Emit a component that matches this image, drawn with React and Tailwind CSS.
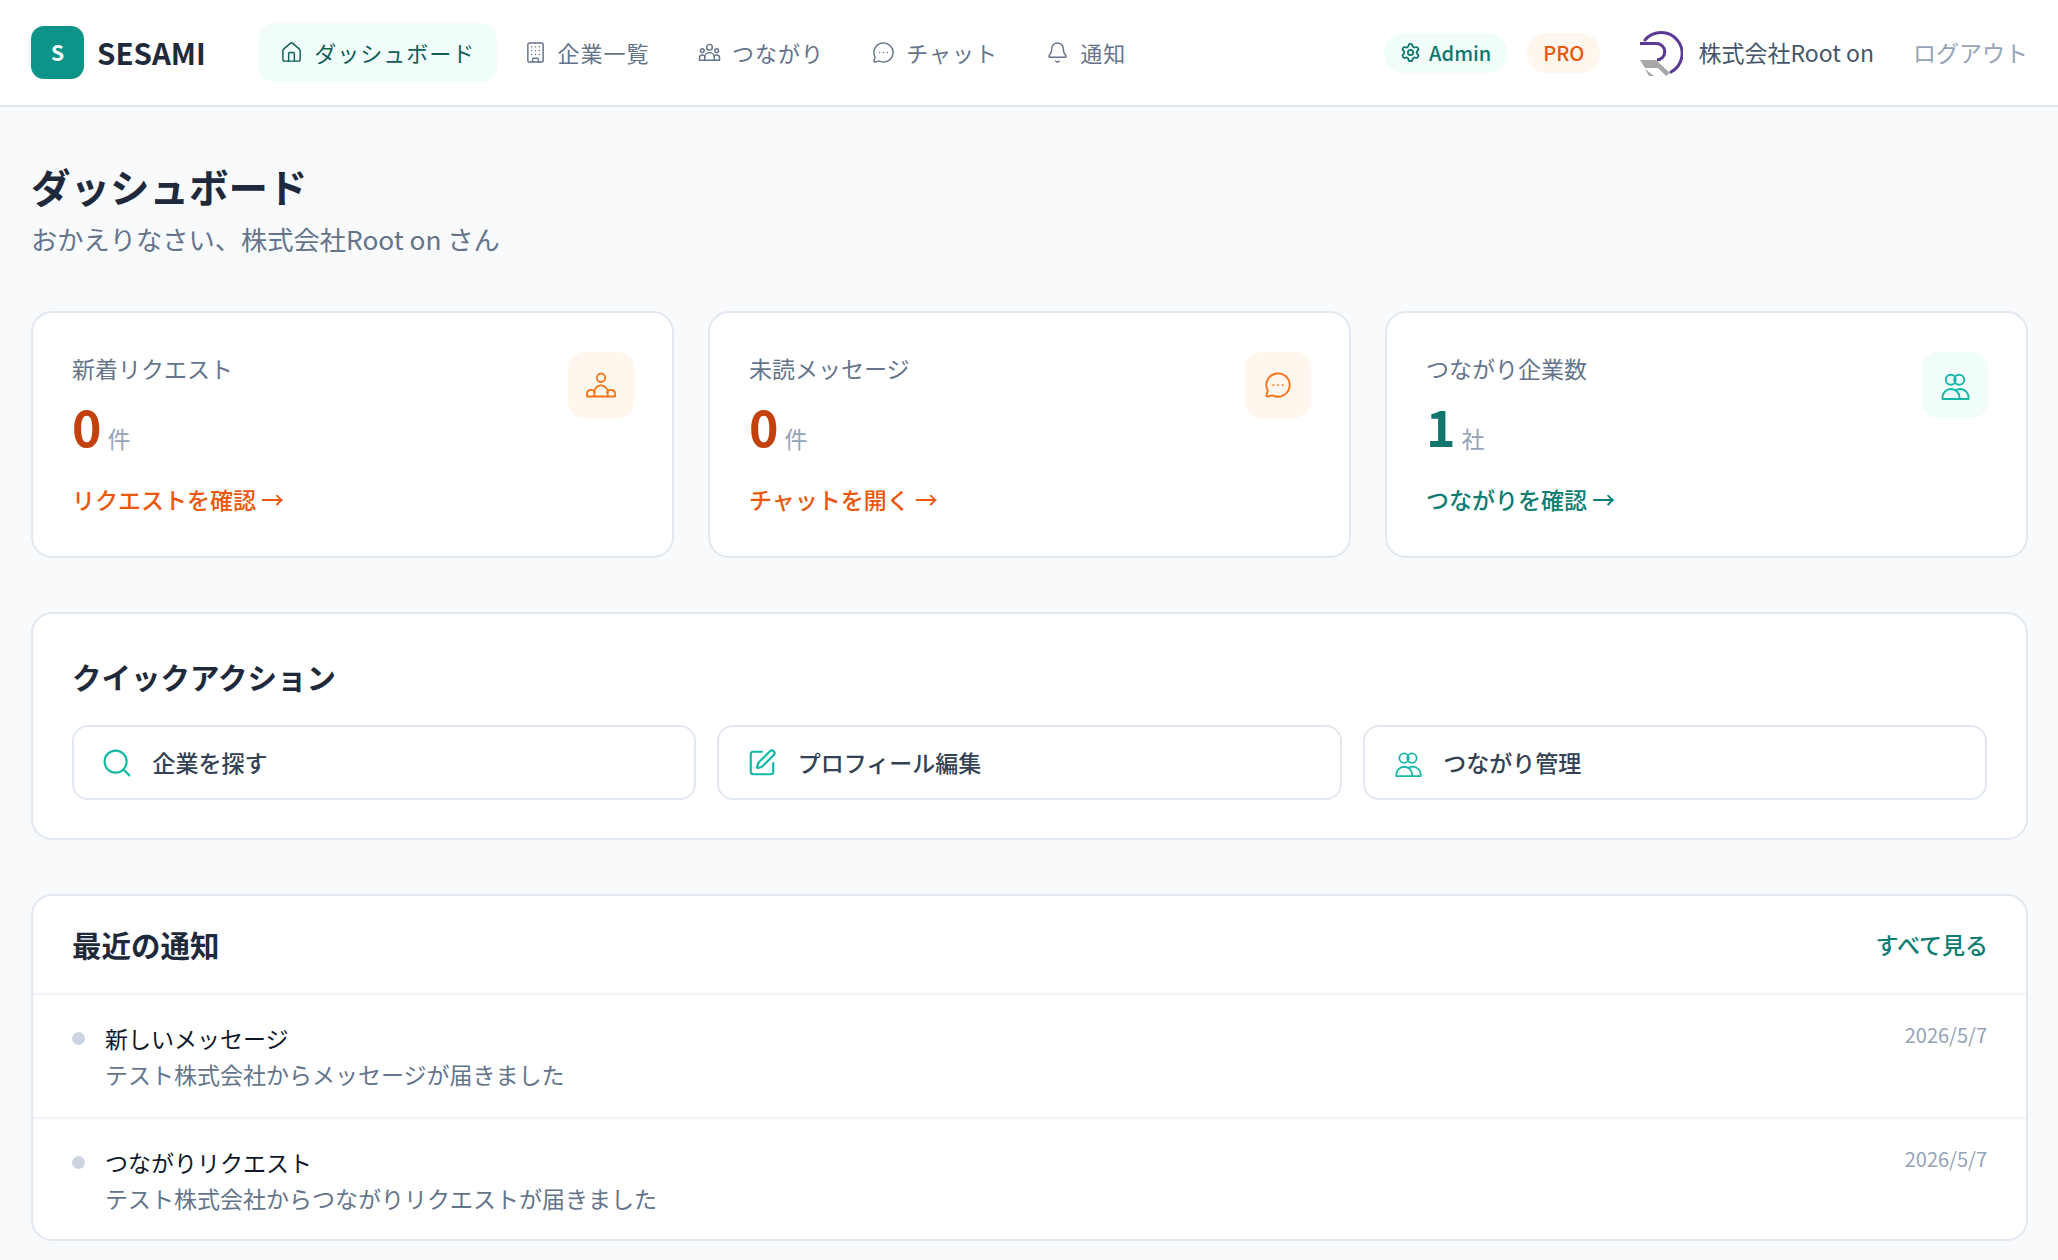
import { Bell, Building, House, MessageCircleMore, Search, Settings, SquarePen } from "lucide-react";

const font = { fontFamily: '"Noto Sans CJK JP", sans-serif' };

const NavPeople = ({ className }) => (
	<svg viewBox="0 0 24 24" fill="none" stroke="currentColor" strokeWidth="1.5" strokeLinecap="round" strokeLinejoin="round" className={className}>
		<circle cx="12" cy="6.5" r="3" />
		<circle cx="4.5" cy="10" r="2" />
		<circle cx="19.5" cy="10" r="2" />
		<path d="M7 20v-3a5 5 0 0 1 10 0v3z" />
		<path d="M7 20H1.5v-2.5a3 3 0 0 1 5.8-1" />
		<path d="M17 20h5.5v-2.5a3 3 0 0 0-5.8-1" />
	</svg>
);

const RequestPeople = ({ className }) => (
	<svg viewBox="0 0 32 32" fill="none" stroke="currentColor" strokeWidth="1.8" strokeLinecap="round" strokeLinejoin="round" className={className}>
		<circle cx="16" cy="8.8" r="4.2" />
		<path d="M9.3 27.5V23a6.7 6.7 0 0 1 13.4 0v4.5z" />
		<path d="M9.3 27.5H2V25a4 4 0 0 1 7.8-1.3" />
		<path d="M22.7 27.5H30V25a4 4 0 0 0-7.8-1.3" />
	</svg>
);

const PeopleTwo = ({ className }) => (
	<svg viewBox="0 0 32 32" fill="none" stroke="currentColor" strokeWidth="1.9" strokeLinecap="round" strokeLinejoin="round" className={className}>
		<circle cx="11.8" cy="10.8" r="5" />
		<circle cx="20.2" cy="10.8" r="5" />
		<path d="M3.5 30h17v-1.5a8.5 8.5 0 0 0-17 0z" />
		<path d="M20.5 30h9v-1.5a8.5 8.5 0 0 0-13-7.2" />
	</svg>
);

const NavItem = ({ icon: Icon, label, active }) => (
	<a className={`flex h-[59px] items-center gap-[11px] rounded-[16px] px-[21.5px] text-[22px] tracking-[1px] ${active ? "bg-[#f0fdfa] text-[#115e59]" : "text-[#64748b]"}`}>
		<Icon className="h-[23px] w-[23px]" strokeWidth={1.5} />
		<span>{label}</span>
	</a>
);

const StatCard = ({ title, count, unit, link, countColor, linkColor, iconBg, iconColor, icon }) => (
	<div className="flex h-[247px] flex-1 justify-between rounded-[21px] border-2 border-[#e2e8f0] bg-white pl-[39px] pr-[38px] pt-[37px]">
		<div>
			<p className="text-[23px] leading-[36px] text-[#64748b]">{title}</p>
			<div className="mt-[9px] flex items-baseline gap-[6px]">
				<span className={`text-[50px] font-bold leading-[60px] ${countColor}`}>{count}</span>
				<span className="relative top-[1px] text-[23px] text-[#94a3b8]">{unit}</span>
			</div>
			<p className={`mt-[26px] text-[23px] font-medium leading-[36px] ${linkColor}`}>{link} →</p>
		</div>
		<div className={`mt-[2px] flex h-[66px] w-[66px] items-center justify-center rounded-[16px] ${iconBg} ${iconColor}`}>{icon}</div>
	</div>
);

const QuickAction = ({ icon, label }) => (
	<a className="flex h-[75px] flex-1 items-center gap-[20.5px] rounded-[16px] border-2 border-[#e2e8f0] bg-white px-[28px] text-[23px] font-medium text-[#334155]">
		{icon}
		<span>{label}</span>
	</a>
);

const NoticeRow = ({ title, body, date, last }) => (
	<div className={`flex justify-between pl-[39px] pr-[39px] pt-[25px] ${last ? "h-[120px]" : "h-[124px] border-b-2 border-[#f1f5f9]"}`}>
		<div className="flex gap-[20px]">
			<span className="mt-[12px] h-[13px] w-[13px] rounded-full bg-[#cbd5e1]" />
			<div>
				<p className="text-[23px] leading-[36px] text-[#0f172a]">{title}</p>
				<p className="text-[23px] leading-[37px] text-[#64748b]">{body}</p>
			</div>
		</div>
		<span className="text-[20px] leading-[30px] text-[#94a3b8]">{date}</span>
	</div>
);

export default function App() {
	return (
		<div style={font} className="min-h-[1260px] bg-[#f8fafc]">
			<header className="flex h-[107px] items-center justify-between border-b-2 border-[#e2e8f0] bg-white pl-[31px] pr-[30px]">
				<div className="flex items-center">
					<div className="flex items-center gap-[13px]">
						<div className="flex h-[53px] w-[53px] items-center justify-center rounded-[13px] bg-[#0d9488] text-[21px] font-bold text-white">S</div>
						<span className="text-[29.5px] font-bold text-[#1e293b]">SESAMI</span>
					</div>
					<nav className="ml-[53px] flex items-center gap-[5.3px]">
						<NavItem icon={House} label="ダッシュボード" active />
						<NavItem icon={Building} label="企業一覧" />
						<NavItem icon={NavPeople} label="つながり" />
						<NavItem icon={MessageCircleMore} label="チャット" />
						<NavItem icon={Bell} label="通知" />
					</nav>
				</div>
				<div className="flex items-center">
					<span className="flex h-[40px] items-center gap-[8px] rounded-full bg-[#f0fdfa] px-[16px] text-[20px] font-medium text-[#0f766e]">
						<Settings className="h-[21px] w-[21px]" strokeWidth={2} />
						Admin
					</span>
					<span className="ml-[20px] flex h-[40px] items-center rounded-full bg-[#fff7ed] px-[16px] text-[20px] font-medium text-[#ea580c]">PRO</span>
					<svg viewBox="0 0 44 46" fill="none" className="ml-[39px] h-[46px] w-[44px]">
						<path d="M6 10A21 21 0 1 1 32 42" stroke="#5b3a94" strokeWidth="3" strokeLinecap="round" />
						<path d="M1 13.5H17a8 8 0 0 1 1 16.5" stroke="#5b3a94" strokeWidth="3" />
						<path d="M1 30H17L31 43 27 46 19 38H6z" fill="#a8a8a8" />
						<path d="M6 39 15 46H10z" fill="#a8a8a8" />
					</svg>
					<span className="ml-[15px] text-[23px] text-[#475569]">株式会社Root on</span>
					<span className="ml-[39px] text-[23px] text-[#94a3b8]">ログアウト</span>
				</div>
			</header>

			<main className="pl-[31px] pr-[30px] pt-[53px]">
				<h1 className="text-[39.5px] font-bold leading-[52px] text-[#1e293b]">ダッシュボード</h1>
				<p className="mt-[9px] text-[26.25px] leading-[36px] text-[#64748b]">おかえりなさい、株式会社Root on さん</p>

				<div className="mt-[54px] flex gap-[34px]">
					<StatCard title="新着リクエスト" count="0" unit="件" link="リクエストを確認" countColor="text-[#c2410c]" linkColor="text-[#ea580c]" iconBg="bg-[#fff7ed]" iconColor="text-[#f97316]" icon={<RequestPeople className="h-[32px] w-[32px]" />} />
					<StatCard title="未読メッセージ" count="0" unit="件" link="チャットを開く" countColor="text-[#c2410c]" linkColor="text-[#ea580c]" iconBg="bg-[#fff7ed]" iconColor="text-[#f97316]" icon={<MessageCircleMore className="h-[28px] w-[28px]" strokeWidth={1.6} />} />
					<StatCard title="つながり企業数" count="1" unit="社" link="つながりを確認" countColor="text-[#0f766e]" linkColor="text-[#0f7d72]" iconBg="bg-[#f0fdfa]" iconColor="text-[#14b8a6]" icon={<PeopleTwo className="h-[32px] w-[32px]" />} />
				</div>

				<section className="mt-[54px] h-[228px] rounded-[21px] border-2 border-[#e2e8f0] bg-white pl-[39px] pr-[39px] pt-[40px]">
					<h2 className="text-[29.5px] font-bold leading-[44px] text-[#1e293b]">クイックアクション</h2>
					<div className="mt-[27px] flex gap-[21px]">
						<QuickAction icon={<Search className="h-[30px] w-[30px] scale-110 text-[#14b8a6]" strokeWidth={1.6} />} label="企業を探す" />
						<QuickAction icon={<SquarePen className="h-[30px] w-[30px] text-[#14b8a6]" strokeWidth={1.75} />} label="プロフィール編集" />
						<QuickAction icon={<PeopleTwo className="h-[30px] w-[30px] text-[#14b8a6]" />} label="つながり管理" />
					</div>
				</section>

				<section className="mt-[54px] rounded-[21px] border-2 border-[#e2e8f0] bg-white">
					<div className="flex h-[99px] items-center justify-between border-b-2 border-[#f1f5f9] pl-[39px] pr-[38px]">
						<h2 className="text-[29.5px] font-bold text-[#1e293b]">最近の通知</h2>
						<a className="text-[23px] font-medium text-[#0f7d72]">すべて見る</a>
					</div>
					<NoticeRow title="新しいメッセージ" body="テスト株式会社からメッセージが届きました" date="2026/5/7" />
					<NoticeRow title="つながりリクエスト" body="テスト株式会社からつながりリクエストが届きました" date="2026/5/7" last />
				</section>
			</main>
		</div>
	);
}
